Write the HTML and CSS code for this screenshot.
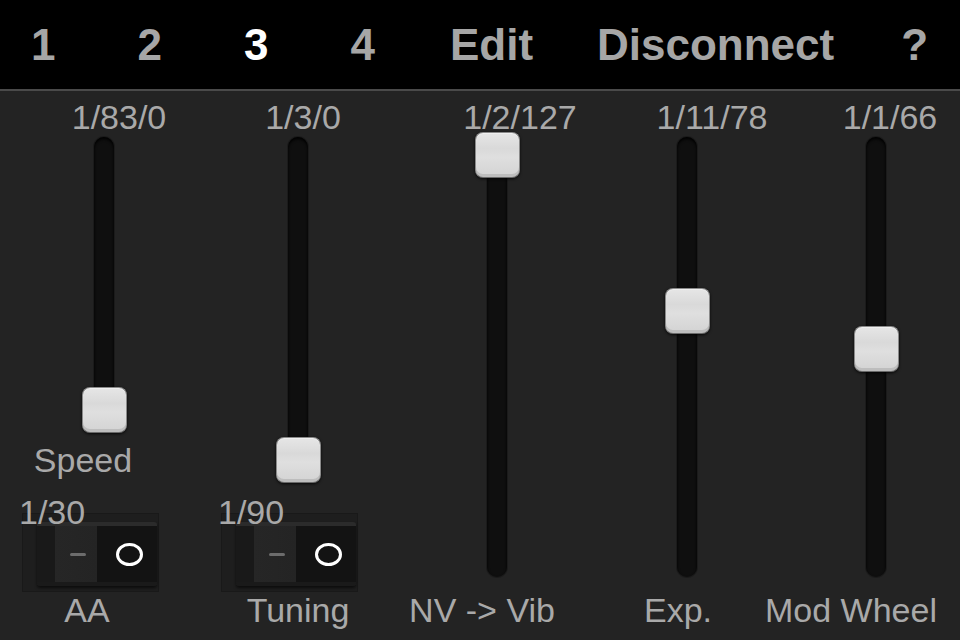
FILE: index.html
```html
<!DOCTYPE html>
<html>
<head>
  <title>Controller Page 3</title>
  <link rel="stylesheet" href="styles.css">
</head>
<body>
  <div class="topbar">
    <a class="tab" href="#">1</a>
    <a class="tab" href="#">2</a>
    <a class="tab active" href="#">3</a>
    <a class="tab" href="#">4</a>
    <a class="tab tab-edit" href="#">Edit</a>
    <a class="tab tab-disc" href="#">Disconnect</a>
    <a class="tab tab-help" href="#">?</a>
  </div>

  <div class="panel">
    <!-- Speed + AA -->
    <div class="col col-1">
      <div class="value">1/83/0</div>
      <div class="track track-speed">
        <div class="travel"><div class="thumb" style="--pos: 1"></div></div>
      </div>
      <div class="name name-speed">Speed</div>
      <div class="switch-group">
        <div class="switch-value">1/30</div>
        <div class="switch">
          <div class="rocker">
            <div class="rocker-off"><span class="dash"></span></div>
            <div class="rocker-on"><span class="ring"></span></div>
          </div>
        </div>
      </div>
      <div class="name name-aa">AA</div>
    </div>

    <!-- Tuning -->
    <div class="col col-2">
      <div class="value">1/3/0</div>
      <div class="track track-tuning">
        <div class="travel"><div class="thumb" style="--pos: 1"></div></div>
      </div>
      <div class="switch-group">
        <div class="switch-value">1/90</div>
        <div class="switch">
          <div class="rocker">
            <div class="rocker-off"><span class="dash"></span></div>
            <div class="rocker-on"><span class="ring"></span></div>
          </div>
        </div>
      </div>
      <div class="name name-tuning">Tuning</div>
    </div>

    <!-- NV -> Vib -->
    <div class="col col-3">
      <div class="value">1/2/127</div>
      <div class="track">
        <div class="travel"><div class="thumb" style="--pos: 0"></div></div>
      </div>
      <div class="name">NV -&gt; Vib</div>
    </div>

    <!-- Expression -->
    <div class="col col-4">
      <div class="value">1/11/78</div>
      <div class="track">
        <div class="travel"><div class="thumb" style="--pos: 0.386"></div></div>
      </div>
      <div class="name">Exp.</div>
    </div>

    <!-- Mod wheel -->
    <div class="col col-5">
      <div class="value">1/1/66</div>
      <div class="track">
        <div class="travel"><div class="thumb" style="--pos: 0.48"></div></div>
      </div>
      <div class="name">Mod Wheel</div>
    </div>
  </div>
</body>
</html>
```

FILE: styles.css
```css
body {
  margin: 0;
  width: 960px;
  height: 640px;
  overflow: hidden;
  background-color: #232323;
  font-family: "Liberation Sans", Arial, sans-serif;
}

/* top navigation */
.topbar {
  display: flex;
  height: 66px;
  padding-top: 23px;
  background-color: #000;
  border-bottom: 2px solid #4a4a4a;
}

.tab {
  margin-left: 82px;
  font-size: 44px;
  line-height: 44px;
  font-weight: bold;
  color: #a6a6a6;
  text-decoration: none;
}

.tab:first-child {
  margin-left: 31px;
}

.tab.active {
  color: #fff;
}

.tab-edit {
  margin-left: 75px;
}

.tab-disc {
  margin-left: 64px;
}

.tab-help {
  margin-left: 67px;
}

/* slider columns */
.panel {
  display: flex;
}

.col {
  flex-shrink: 0;
  width: 170px;
  display: flex;
  flex-direction: column;
  align-items: center;
}

.col-1 { margin-left: 19px; }
.col-2 { margin-left: 24px; }
.col-3 { margin-left: 29px; }
.col-4 { margin-left: 20px; }
.col-5 { margin-left: 19px; }

.value,
.name {
  font-size: 34px;
  line-height: 34px;
  color: #a9a9a9;
  white-space: nowrap;
}

.value {
  margin-top: 9px;
}

.col-1 .value { margin-left: 30px; }
.col-2 .value { margin-left: 10px; }
.col-3 .value { margin-left: 46px; }
.col-4 .value { margin-left: 50px; }
.col-5 .value { margin-left: 28px; }

.name {
  margin-top: 16px;
}

.col-3 .name { margin-right: 30px; }
.col-4 .name { margin-right: 18px; }
.col-5 .name { margin-right: 50px; }

.name-speed {
  margin-top: 15px;
  margin-right: 42px;
}

.name-aa {
  margin-top: 1px;
  margin-right: 34px;
}

.name-tuning {
  margin-top: 1px;
}

/* track + thumb */
.track {
  position: relative;
  width: 20px;
  height: 440px;
  margin-top: 3px;
  background-color: #0f0f0f;
  border-radius: 10px;
  box-shadow: inset 0 2px 3px #000, 0 0 0 1px #1b1b1b;
}

.track-speed {
  height: 291px;
}

.track-tuning {
  height: 341px;
}

.travel {
  position: absolute;
  top: -5px;
  bottom: -5px;
  left: 0;
  right: 0;
}

.thumb {
  position: absolute;
  left: calc(50% - 22px);
  top: calc(var(--pos) * (100% - 46px));
  width: 45px;
  height: 46px;
  box-sizing: border-box;
  border-radius: 8px;
  border: 1px solid #8a8a8a;
  border-bottom-color: #6a6a6a;
  background: linear-gradient(#e6e6e6, #d9d9d9 35%, #dfdfdf 55%, #d3d3d3);
  box-shadow: 0 1px 3px rgba(0, 0, 0, 0.8), inset 0 -3px 0 #bdbdbd, inset 0 1px 0 #efefef;
}

/* rocker switches */
.switch-group {
  width: 140px;
  margin-top: 18px;
}

.col-1 .switch-group { margin-right: 30px; }
.col-2 .switch-group { margin-top: 17px; margin-right: 20px; }

.switch-value {
  position: relative;
  z-index: 1;
  font-size: 34px;
  line-height: 34px;
  color: #a9a9a9;
}

.switch {
  width: 137px;
  height: 79px;
  box-sizing: border-box;
  margin-top: -16px;
  margin-left: 3px;
  padding: 8px 1px 5px 14px;
  background-color: #1e1e1e;
  border: 1px solid #191919;
}

.rocker {
  display: flex;
  height: 100%;
  border-radius: 3px;
  overflow: hidden;
  border-top: 4px solid #2b2b2b;
  border-bottom: 4px solid #1a1a1a;
  box-sizing: border-box;
  box-shadow: 0 2px 3px rgba(0, 0, 0, 0.6);
}

.rocker-off {
  flex: 0 0 60px;
  display: flex;
  align-items: center;
  padding-left: 33px;
  box-sizing: border-box;
  background: linear-gradient(90deg, #191919 0, #191919 18px, #262626 18px, #242424);
}

.dash {
  width: 16px;
  height: 3px;
  border-radius: 2px;
  background-color: #6c6c6c;
}

.rocker-on {
  flex: 1;
  display: flex;
  align-items: center;
  justify-content: center;
  padding-left: 4px;
  background-color: #131313;
}

.ring {
  width: 21px;
  height: 17px;
  border: 3px solid #fff;
  border-radius: 50%;
}
```
